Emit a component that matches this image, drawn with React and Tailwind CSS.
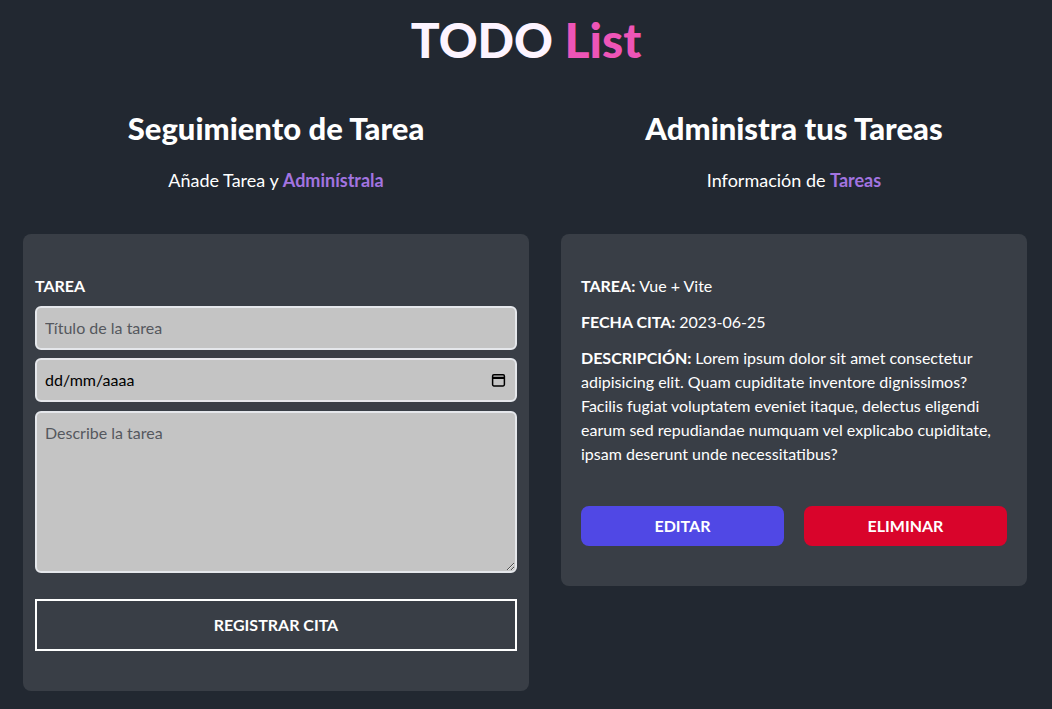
import { useState } from 'react';

const task = {
  nombre: 'Vue + Vite',
  fecha: '2023-06-25',
  descripcion:
    'Lorem ipsum dolor sit amet consectetur adipisicing elit. Quam cupiditate inventore dignissimos? Facilis fugiat voluptatem eveniet itaque, delectus eligendi earum sed repudiandae numquam vel explicabo cupiditate, ipsam deserunt unde necessitatibus?',
};

// icono de calendario como el del input date nativo
function CalendarIcon() {
  return (
    <svg viewBox="0 0 14 14" className="h-[15px] w-[15px]" fill="none" stroke="black">
      <rect x="1.5" y="2" width="11" height="10.5" rx="1.2" strokeWidth="1.4" />
      <path d="M1.5 5h11" strokeWidth="2.2" />
    </svg>
  );
}

function Formulario() {
  const [nombre, setNombre] = useState('');
  const [fecha, setFecha] = useState('');
  const [descripcion, setDescripcion] = useState('');

  return (
    <div className="w-[506px]">
      <h2 className="text-center text-[31px] leading-9 font-black text-white">Seguimiento de Tarea</h2>
      <p className="mt-5 text-center text-lg text-white">
        Añade Tarea y <span className="font-bold text-[#a374e0]">Adminístrala</span>
      </p>

      <form className="mt-10 rounded-lg bg-[#393e46] px-3 py-10" onSubmit={(e) => e.preventDefault()}>
        <label htmlFor="tarea" className="block font-bold uppercase text-white">
          Tarea
        </label>
        <input
          id="tarea"
          type="text"
          placeholder="Título de la tarea"
          value={nombre}
          onChange={(e) => setNombre(e.target.value)}
          className="mt-2 block w-full rounded-md border-2 border-gray-200 bg-[#c4c4c4] p-2 text-black placeholder-[#55585e] outline-none"
        />
        <div className="relative mt-2">
          <input
            type="text"
            placeholder="dd/mm/aaaa"
            value={fecha}
            onChange={(e) => setFecha(e.target.value)}
            className="block w-full rounded-md border-2 border-gray-200 bg-[#c4c4c4] p-2 text-black placeholder-black outline-none"
          />
          <span className="pointer-events-none absolute right-[11px] top-1/2 -translate-y-1/2">
            <CalendarIcon />
          </span>
        </div>
        <textarea
          placeholder="Describe la tarea"
          value={descripcion}
          onChange={(e) => setDescripcion(e.target.value)}
          className="mt-[9px] block h-[162px] w-full rounded-md border-2 border-gray-200 bg-[#c4c4c4] p-2 text-black placeholder-[#55585e] outline-none"
        />
        <button
          type="submit"
          className="mt-[26px] block w-full border-2 border-white py-3 font-bold uppercase text-white"
        >
          Registrar Cita
        </button>
      </form>
    </div>
  );
}

function Listado() {
  return (
    <div className="flex-1">
      <h2 className="text-center text-[31px] leading-9 font-black text-white">Administra tus Tareas</h2>
      <p className="mt-5 text-center text-lg text-white">
        Información de <span className="font-bold text-[#a374e0]">Tareas</span>
      </p>

      <div className="mt-10 rounded-lg bg-[#393e46] px-5 py-10 text-white">
        <p className="mb-3">
          <span className="font-bold uppercase">Tarea: </span>
          {task.nombre}
        </p>
        <p className="mb-3">
          <span className="font-bold uppercase">Fecha Cita: </span>
          {task.fecha}
        </p>
        <p>
          <span className="font-bold uppercase">Descripción: </span>
          {task.descripcion}
        </p>

        <div className="mt-10 grid grid-cols-2 gap-5">
          <button className="rounded-lg bg-[#5048e5] py-2 font-bold uppercase text-white">Editar</button>
          <button className="rounded-lg bg-[#d9042b] py-2 font-bold uppercase text-white">Eliminar</button>
        </div>
      </div>
    </div>
  );
}

export default function App() {
  return (
    <div className="min-h-screen bg-[#222831] pb-5 font-['Segoe_UI','Lato','Noto_Sans',sans-serif]">
      <h1 className="pt-4 text-center text-5xl font-black text-[#fdf4ff]">
        TODO <span className="text-[#ee55b7]">List</span>
      </h1>

      <div className="mt-[46px] flex items-start gap-8 pl-[23px] pr-[25px]">
        <Formulario />
        <Listado />
      </div>
    </div>
  );
}
